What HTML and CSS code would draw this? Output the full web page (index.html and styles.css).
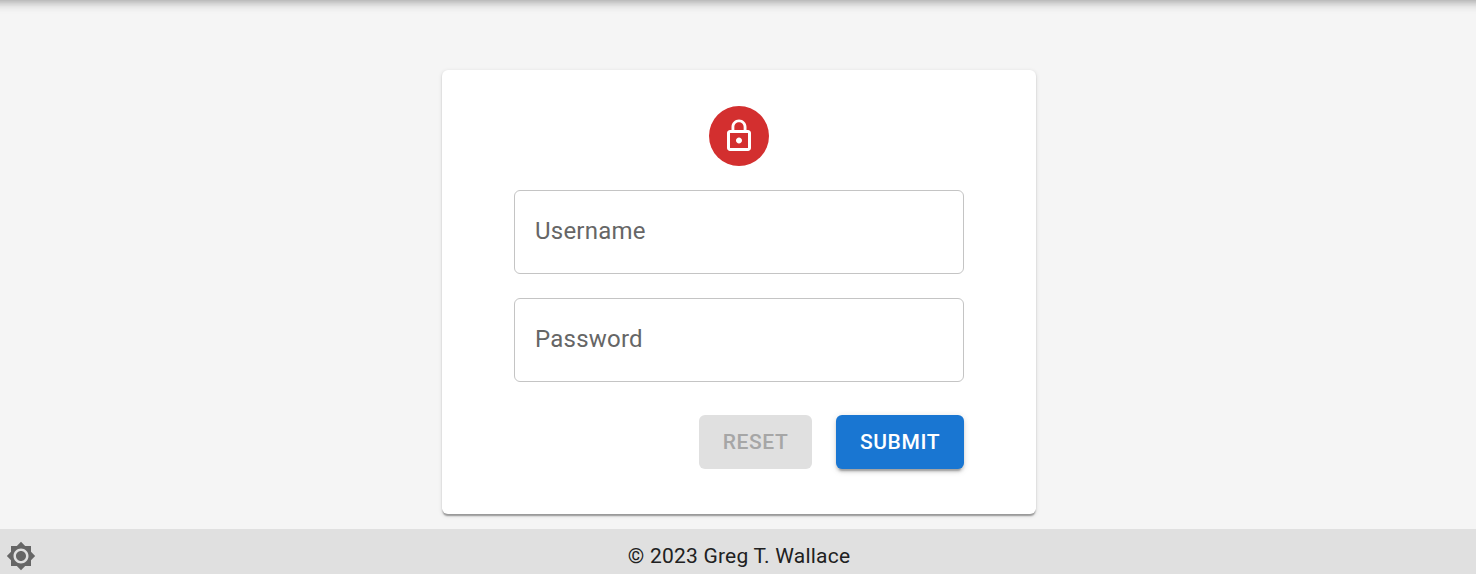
FILE: index.html
```html
<!DOCTYPE html>
<html lang="en">
<head>
<meta charset="utf-8">
<title>Login</title>
<link rel="stylesheet" href="styles.css">
</head>
<body>
<header class="appbar"></header>
<main class="main">
  <form class="card">
    <div class="avatar">
      <svg class="avatar-icon" viewBox="0 0 24 24"><path d="M12 17c1.100 0 2-.9 2-2s-.9-2-2-2-2 .9-2 2 .9 2 2 2zm6-9h-1V6c0-2.760-2.240-5-5-5S7 3.240 7 6v2H6c-1.100 0-2 .9-2 2v10c0 1.100.9 2 2 2h12c1.100 0 2-.9 2-2V10c0-1.100-.9-2-2-2zM8.900 6c0-1.710 1.390-3.100 3.100-3.100s3.100 1.390 3.100 3.100v2H8.900V6zM18 20H6V10h12v10z"/></svg>
    </div>
    <label class="field">Username</label>
    <label class="field">Password</label>
    <div class="actions">
      <button class="btn btn-reset" type="reset" disabled>RESET</button>
      <button class="btn btn-submit" type="button">SUBMIT</button>
    </div>
  </form>
</main>
<footer class="footer">
  <svg class="theme-icon" viewBox="0 0 24 24"><path d="M20 8.690V4h-4.690L12 .69 8.690 4H4v4.690L.69 12 4 15.310V20h4.690L12 23.310 15.310 20H20v-4.690L23.310 12 20 8.690zM12 18c-3.310 0-6-2.690-6-6s2.690-6 6-6 6 2.690 6 6-2.690 6-6 6zm0-10c-2.210 0-4 1.790-4 4s1.790 4 4 4 4-1.790 4-4-1.790-4-4-4z"/></svg>
  <span class="copyright">© 2023 Greg T. Wallace</span>
</footer>
</body>
</html>
```

FILE: styles.css
```css
* { box-sizing: border-box; }

body {
  margin: 0;
  height: 574px;
  overflow: hidden;
  display: flow-root;
  background: #f5f5f5;
  font-family: Roboto, "Liberation Sans", sans-serif;
}

.appbar {
  height: 64px;
  margin: -65px -20px 1px;
  background: #1976d2;
  box-shadow: 0 3px 6px -1.5px rgba(0,0,0,.16), 0 6px 7.5px rgba(0,0,0,.11), 0 1.5px 15px rgba(0,0,0,.12);
}

.main {
  height: 529px;
  display: flex;
  justify-content: center;
  align-items: flex-start;
  padding: 70px 0 0 2px;
}

.card {
  width: 594px;
  height: 444px;
  padding: 36px 72px 0;
  display: flex;
  flex-direction: column;
  background: #fff;
  border-radius: 6px;
  box-shadow: 0 3px 1.5px -1.5px rgba(0,0,0,.2), 0 1.5px 1.5px rgba(0,0,0,.14), 0 1.5px 4.5px rgba(0,0,0,.12);
}

.avatar {
  align-self: center;
  display: grid;
  place-items: center;
  width: 60px;
  height: 60px;
  border-radius: 50%;
  background: #d32f2f;
}

.avatar-icon { width: 36px; height: 36px; fill: #fff; }

.field {
  display: flex;
  align-items: center;
  height: 84px;
  margin-top: 24px;
  padding: 0 20px 2px;
  border: 1px solid #c4c4c4;
  border-radius: 6px;
  color: #666;
  font-size: 24px;
  letter-spacing: .225px;
}

.actions {
  display: flex;
  justify-content: flex-end;
  gap: 24px;
  margin-top: 33px;
}

.btn {
  height: 54px;
  padding: 0;
  border: 0;
  border-radius: 6px;
  font: 500 21px/36px Roboto, "Liberation Sans", sans-serif;
  letter-spacing: .6px;
}

.btn-reset { width: 113px; background: #e0e0e0; color: #a6a6a6; }

.btn-submit {
  width: 128px;
  background: #1976d2;
  color: #fff;
  box-shadow: 0 4.5px 1.5px -3px rgba(0,0,0,.2), 0 3px 3px rgba(0,0,0,.14), 0 1.5px 7.5px rgba(0,0,0,.12);
}

.footer {
  display: grid;
  grid-template-columns: 42px 1fr 40px;
  align-items: center;
  height: 45px;
  padding-top: 8px;
  background: #e0e0e0;
}

.theme-icon { width: 30px; height: 30px; justify-self: center; fill: #666; }

.copyright {
  text-align: center;
  color: #212121;
  font-size: 21px;
  letter-spacing: .225px;
}
```
